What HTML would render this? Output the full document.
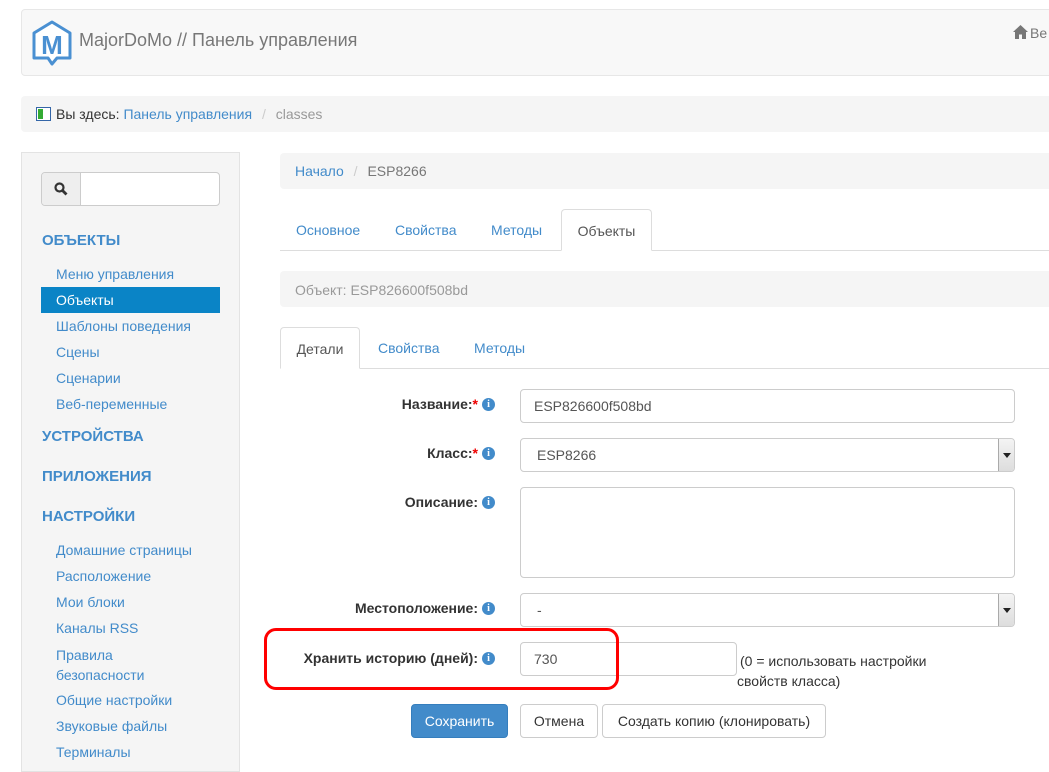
<!DOCTYPE html>
<html><head><meta charset="utf-8"><style>
*{box-sizing:border-box;margin:0;padding:0}
body{width:1049px;height:761px;overflow:hidden;background:#fff;font-family:"Liberation Sans",sans-serif;font-size:14px;color:#333;position:relative}
.a{position:absolute}
a,.lk{color:#428bca;text-decoration:none}
.nav{left:21px;top:9px;width:1040px;height:67px;background:#f8f8f8;border:1px solid #e7e7e7;border-radius:4px}
.bc{background:#f5f5f5;border-radius:4px}
.side{left:21px;top:152px;width:219px;height:620px;background:#f5f5f5;border:1px solid #e3e3e3}
.h{font-weight:bold;color:#428bca;font-size:15px}
.si{left:56px;font-size:14px;color:#428bca}
.tab{height:42px;line-height:40px;font-size:14px;color:#428bca}
.tabact{background:#fff;border:1px solid #ddd;border-bottom-color:#fff;border-radius:4px 4px 0 0;color:#555}
.inp{background:#fff;border:1px solid #ccc;border-radius:4px;color:#555;padding-left:13px;line-height:32px;font-size:14px}
.lab{font-weight:bold;text-align:right;width:200px;font-size:14px}
.i{display:inline-block;width:13px;height:13px;border-radius:50%;background:#428bca;color:#fff;font-size:10px;line-height:13px;text-align:center;font-weight:bold;vertical-align:2px;margin-left:4px;font-family:"Liberation Serif",serif}
.st{color:#e00}
.sel{right:0;top:0;width:16px;height:100%;background:linear-gradient(#f4f4f4,#ddd);border-left:1px solid #aaa;border-radius:0 3px 3px 0}
.sel:after{content:"";position:absolute;left:4px;top:14px;border:4px solid transparent;border-top:5px solid #222}
.btn{height:34px;line-height:32px;border:1px solid #ccc;border-radius:4px;background:#fff;text-align:center;font-size:14px}
</style></head><body>
<div class="a nav"></div>
<svg class="a" style="left:31px;top:20px" width="42" height="46" viewBox="0 0 42 46"><path d="M21 2 L39 13 V38 H26 L21 44 L17 38 H3 V13 Z" fill="#fff" stroke="#4a90d2" stroke-width="3" stroke-linejoin="round"/><text x="21" y="34" font-family="Liberation Sans" font-weight="bold" font-size="26" fill="#4a90d2" text-anchor="middle">M</text></svg>
<div class="a" style="left:79px;top:30px;font-size:18px;color:#777">MajorDoMo // Панель управления</div>
<svg class="a" style="left:1013px;top:25px" width="15" height="14" viewBox="0 0 15 14"><path d="M7.5 0 L15 7 H13 V14 H9 V9.5 H6 V14 H2 V7 H0 Z" fill="#777"/></svg>
<div class="a" style="left:1030px;top:25px;color:#777">Ве</div>
<div class="a bc" style="left:21px;top:96px;width:1040px;height:36px"></div>
<svg class="a" style="left:36px;top:107px" width="15" height="14"><rect x="0.5" y="0.5" width="14" height="13" fill="#fff" stroke="#3466a8"/><rect x="2" y="2" width="5" height="10" fill="#3a3"/></svg>
<div class="a" style="left:56px;top:106px">Вы здесь: <span class="lk">Панель управления</span> <span style="color:#ccc;padding:0 6px">/</span> <span style="color:#999">classes</span></div>
<div class="a side"></div>
<div class="a" style="left:41px;top:172px;width:179px;height:34px;border:1px solid #ccc;border-radius:4px;background:#fff"><div style="width:39px;height:32px;background:#eee;border-right:1px solid #ccc;border-radius:3px 0 0 3px"></div></div>
<svg class="a" style="left:54px;top:182px" width="14" height="14"><circle cx="5.5" cy="5.5" r="4" fill="none" stroke="#333" stroke-width="2.2"/><path d="M8.5 8.5 L12.5 12.5" stroke="#333" stroke-width="2.8"/></svg>
<div class="a h" style="left:42px;top:232px">ОБЪЕКТЫ</div>
<div class="a si" style="top:266px">Меню управления</div>
<div class="a" style="left:41px;top:287px;width:179px;height:26px;background:#0a84c6"></div>
<div class="a si" style="top:292px;color:#fff">Объекты</div>
<div class="a si" style="top:318px">Шаблоны поведения</div>
<div class="a si" style="top:344px">Сцены</div>
<div class="a si" style="top:370px">Сценарии</div>
<div class="a si" style="top:396px">Веб-переменные</div>
<div class="a h" style="left:42px;top:428px">УСТРОЙСТВА</div>
<div class="a h" style="left:42px;top:468px">ПРИЛОЖЕНИЯ</div>
<div class="a h" style="left:42px;top:508px">НАСТРОЙКИ</div>
<div class="a si" style="top:542px">Домашние страницы</div>
<div class="a si" style="top:568px">Расположение</div>
<div class="a si" style="top:594px">Мои блоки</div>
<div class="a si" style="top:620px">Каналы RSS</div>
<div class="a si" style="top:645px;line-height:20px">Правила<br>безопасности</div>
<div class="a si" style="top:692px">Общие настройки</div>
<div class="a si" style="top:718px">Звуковые файлы</div>
<div class="a si" style="top:744px">Терминалы</div>
<div class="a bc" style="left:280px;top:153px;width:780px;height:36px"></div>
<div class="a" style="left:295px;top:163px"><span class="lk">Начало</span> <span style="color:#ccc;padding:0 6px">/</span> <span style="color:#777">ESP8266</span></div>
<div class="a" style="left:280px;top:250px;width:780px;height:1px;background:#ddd"></div>
<div class="a tab" style="left:296px;top:210px">Основное</div>
<div class="a tab" style="left:395px;top:210px">Свойства</div>
<div class="a tab" style="left:491px;top:210px">Методы</div>
<div class="a tab tabact" style="left:561px;top:209px;width:91px;text-align:center;line-height:42px">Объекты</div>
<div class="a bc" style="left:280px;top:271px;width:780px;height:36px"></div>
<div class="a" style="left:295px;top:282px;color:#999">Объект: ESP826600f508bd</div>
<div class="a" style="left:280px;top:368px;width:780px;height:1px;background:#ddd"></div>
<div class="a tab tabact" style="left:280px;top:327px;width:80px;text-align:center;line-height:42px">Детали</div>
<div class="a tab" style="left:378px;top:328px">Свойства</div>
<div class="a tab" style="left:474px;top:328px">Методы</div>
<div class="a lab" style="left:295px;top:396px">Название:<span class="st">*</span><span class="i">i</span></div>
<div class="a inp" style="left:520px;top:389px;width:495px;height:34px">ESP826600f508bd</div>
<div class="a lab" style="left:295px;top:445px">Класс:<span class="st">*</span><span class="i">i</span></div>
<div class="a inp" style="left:520px;top:438px;width:495px;height:34px;padding-left:16px">ESP8266<div class="a sel"></div></div>
<div class="a lab" style="left:295px;top:494px">Описание:<span class="i">i</span></div>
<div class="a inp" style="left:520px;top:487px;width:495px;height:91px"></div>
<div class="a lab" style="left:295px;top:600px">Местоположение:<span class="i">i</span></div>
<div class="a inp" style="left:520px;top:593px;width:495px;height:34px;padding-left:16px">-<div class="a sel"></div></div>
<div class="a lab" style="left:295px;top:650px">Хранить историю (дней):<span class="i">i</span></div>
<div class="a inp" style="left:520px;top:642px;width:217px;height:34px">730</div>
<div class="a" style="left:740px;top:651px;font-size:14px;line-height:20px">(0 = использовать настройки<br><span style="margin-left:-3px">свойств класса)</span></div>
<div class="a" style="left:264px;top:628px;width:355px;height:62px;border:3px solid #f00;border-radius:12px"></div>
<div class="a btn" style="left:411px;top:704px;width:97px;background:#428bca;border-color:#357ebd;color:#fff">Сохранить</div>
<div class="a btn" style="left:520px;top:704px;width:78px">Отмена</div>
<div class="a btn" style="left:602px;top:704px;width:224px">Создать копию (клонировать)</div>
</body></html>
